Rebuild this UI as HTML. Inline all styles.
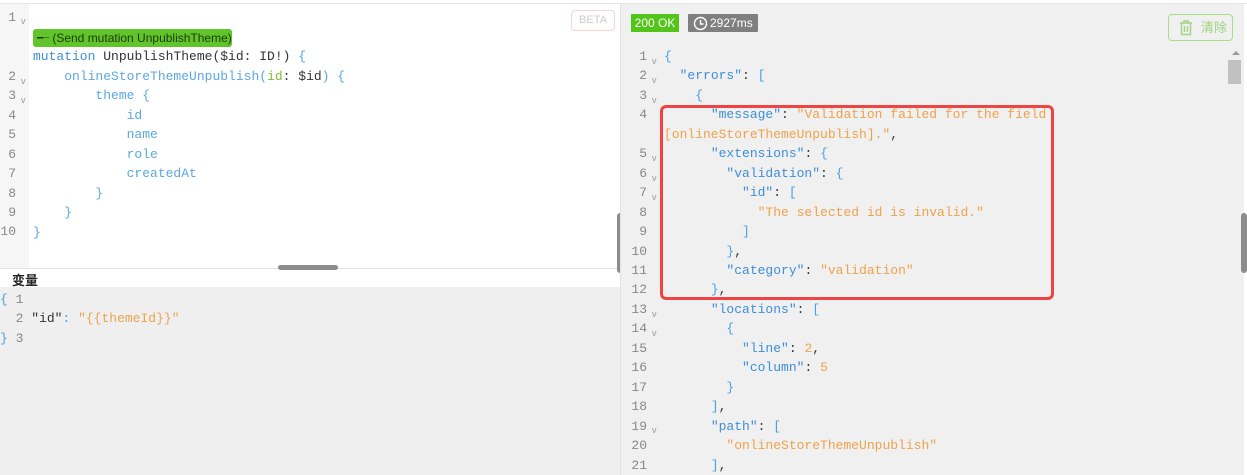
<!DOCTYPE html>
<html><head><meta charset="utf-8"><style>
*{margin:0;padding:0;box-sizing:border-box}
body{width:1247px;height:475px;overflow:hidden;background:#fff;font-family:"Liberation Sans","Noto Sans CJK SC",sans-serif;position:relative}
.m{font-family:"Liberation Mono",monospace;font-size:13px;white-space:pre;position:absolute;line-height:19.45px}
.ln{color:#888;text-align:right;width:16px}
.ar{color:#999;font-size:9px;position:absolute;line-height:10px;font-family:"Liberation Sans",sans-serif}
.k{color:#3d8ed8}.f{color:#5aa8e3}.d{color:#333}.s{color:#efa24a}.p{color:#4aa2e6}.g{color:#7abf3a}.n{color:#efa24a}
</style></head><body>
<div style="position:absolute;left:0;top:3px;width:1247px;height:1px;background:#e6e6e6"></div>
<!-- left editor -->
<div style="position:absolute;left:0;top:4px;width:29px;height:264px;background:#f6f6f6"></div>
<div style="position:absolute;left:0;top:268px;width:620px;height:1px;background:#e4e4e4"></div>
<div style="position:absolute;left:0;top:287px;width:620px;height:188px;background:#efefef"></div>
<div style="position:absolute;left:571px;top:10px;width:44px;height:21px;border:1px solid #fbd3d3;border-radius:4px;color:#ccc;font-size:11px;text-align:center;line-height:19px">BETA</div>
<div style="position:absolute;left:33px;top:29px;width:199px;height:18px;background:#61c42a;border-radius:3px;color:#1d3b0a;font-size:12px;line-height:18px;padding-left:4px">╾ (Send mutation UnpublishTheme)</div>
<div class="m ln" style="left:0;top:8px">1</div><div class="ar" style="left:21px;top:16px">v</div>
<div class="m" style="left:33px;top:47px"><span class="k">mutation</span> <span class="d">UnpublishTheme($id: ID!)</span> <span class="p">{</span></div>
<div class="m ln" style="left:0;top:67px;line-height:19.45px">2
3
4
5
6
7
8
9</div>
<div class="m ln" style="left:-1px;top:222px;width:17px">10</div>
<div class="ar" style="left:21px;top:76px">v</div><div class="ar" style="left:21px;top:95px">v</div>
<div class="m" style="left:33px;top:67px">    <span class="f">onlineStoreThemeUnpublish(<span class="g">id</span><span class="d">: $id</span>) {</span>
        <span class="f">theme {</span>
            <span class="f">id</span>
            <span class="f">name</span>
            <span class="f">role</span>
            <span class="f">createdAt</span>
        <span class="f">}</span>
    <span class="f">}</span>
<span class="f">}</span></div>
<div style="position:absolute;left:278px;top:265px;width:60px;height:5px;border-radius:3px;background:#8c8c8c"></div>
<div style="position:absolute;left:12px;top:270px;font-size:13px;font-weight:bold;color:#222">变量</div>
<div class="m" style="left:0;top:290px"><span class="p">{</span> <span style="color:#888">1</span>
  <span style="color:#888">2</span> <span class="d">"id"</span><span class="p">:</span> <span class="s">"{{themeId}}"</span>
<span class="p">}</span> <span style="color:#888">3</span></div>
<div style="position:absolute;left:617px;top:213px;width:6px;height:60px;border-radius:3px;background:#8c8c8c"></div>
<!-- right -->
<div style="position:absolute;left:620px;top:3px;width:1px;height:472px;background:#e2e2e2"></div>
<div style="position:absolute;left:621px;top:4px;width:623px;height:471px;background:#f0f0f0"></div>
<div style="position:absolute;left:1244px;top:4px;width:3px;height:471px;background:#fff"></div>
<div style="position:absolute;left:631px;top:14px;width:48px;height:18px;background:#52c41a;color:#fff;font-size:12px;line-height:18px;text-align:center">200 OK</div>
<div style="position:absolute;left:688px;top:14px;width:70px;height:18px;background:#7f7f7f;color:#fff;font-size:12px;line-height:18px;padding-left:22px;border-radius:1px">2927ms</div>
<svg style="position:absolute;left:693px;top:16px" width="15" height="15" viewBox="0 0 15 15"><circle cx="7.5" cy="7.5" r="6" fill="none" stroke="#fff" stroke-width="1.4"/><path d="M7.5 4v4h3" fill="none" stroke="#fff" stroke-width="1.4"/></svg>
<div style="position:absolute;left:1168px;top:14px;width:65px;height:27px;border:1px solid #a8dd88;border-radius:4px;color:#9fd480;font-size:13px;line-height:25px;padding-left:32px">清除</div>
<svg style="position:absolute;left:1179px;top:20px" width="14" height="16" viewBox="0 0 14 16"><path d="M1 3h12M5 3V1h4v2M2.5 3.5v11h9v-11M5.5 6v6M8.5 6v6" fill="none" stroke="#9fd480" stroke-width="1.4"/></svg>
<div style="position:absolute;left:1232px;top:51px;width:0;height:0;border-left:4px solid transparent;border-right:4px solid transparent;border-bottom:4px solid #999"></div>
<div style="position:absolute;left:1228px;top:60px;width:13px;height:24px;background:#c1c1c1"></div>
<div style="position:absolute;left:1241px;top:213px;width:6px;height:60px;border-radius:3px;background:#8c8c8c"></div>
<div class="m ln" style="left:631px;top:47px;line-height:19.45px">1
2
3
4

5
6
7
8
9
10
11
12
13
14
15
16
17
18
19
20
21</div>
<div class="ar" style="left:652px;top:56px">v</div>
<div class="ar" style="left:652px;top:75px">v</div>
<div class="ar" style="left:652px;top:95px">v</div>
<div class="ar" style="left:652px;top:153px">v</div>
<div class="ar" style="left:652px;top:173px">v</div>
<div class="ar" style="left:652px;top:192px">v</div>
<div class="ar" style="left:652px;top:309px">v</div>
<div class="ar" style="left:652px;top:328px">v</div>
<div class="ar" style="left:652px;top:425px">v</div>
<div class="m" style="left:664px;top:47px"><span class="p">{</span>
  <span class="k">"errors"</span><span class="d">:</span> <span class="p">[</span>
    <span class="p">{</span>
      <span class="k">"message"</span><span class="d">:</span> <span class="s">"Validation failed for the field</span>
<span class="s">[onlineStoreThemeUnpublish]."</span><span class="d">,</span>
      <span class="k">"extensions"</span><span class="d">:</span> <span class="p">{</span>
        <span class="k">"validation"</span><span class="d">:</span> <span class="p">{</span>
          <span class="k">"id"</span><span class="d">:</span> <span class="p">[</span>
            <span class="s">"The selected id is invalid."</span>
          <span class="p">]</span>
        <span class="p">}</span><span class="d">,</span>
        <span class="k">"category"</span><span class="d">:</span> <span class="s">"validation"</span>
      <span class="p">}</span><span class="d">,</span>
      <span class="k">"locations"</span><span class="d">:</span> <span class="p">[</span>
        <span class="p">{</span>
          <span class="k">"line"</span><span class="d">:</span> <span class="n">2</span><span class="d">,</span>
          <span class="k">"column"</span><span class="d">:</span> <span class="n">5</span>
        <span class="p">}</span>
      <span class="p">]</span><span class="d">,</span>
      <span class="k">"path"</span><span class="d">:</span> <span class="p">[</span>
        <span class="s">"onlineStoreThemeUnpublish"</span>
      <span class="p">]</span><span class="d">,</span></div>
<div style="position:absolute;left:660px;top:105px;width:394px;height:195px;border:3px solid #ef4444;border-radius:6px"></div>
</body></html>
